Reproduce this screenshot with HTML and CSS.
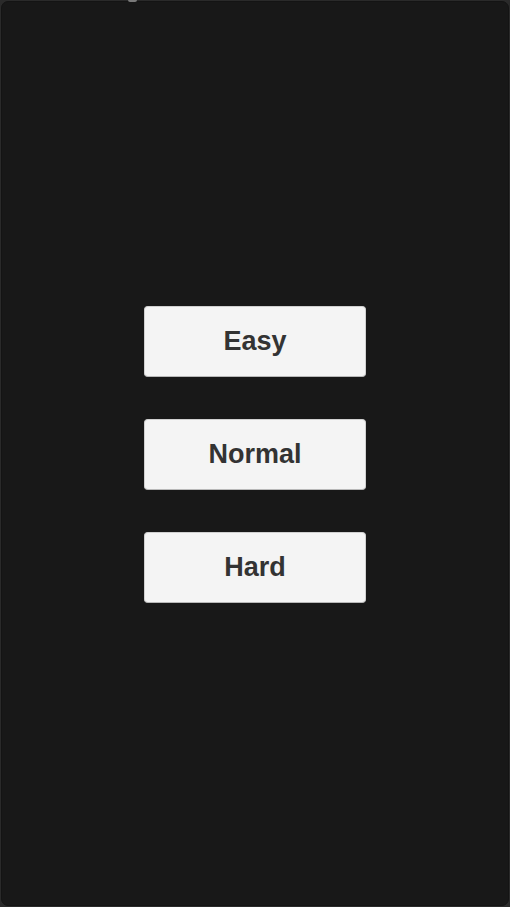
FILE: index.html
```html
<!DOCTYPE html>
<html>
<head>
<meta charset="utf-8">
<link rel="stylesheet" href="styles.css">
</head>
<body>
<div class="frame">
  <span class="notch"></span>
  <div class="panel">
    <div class="menu">
      <button class="btn">Easy</button>
      <button class="btn">Normal</button>
      <button class="btn">Hard</button>
    </div>
  </div>
</div>
</body>
</html>
```
FILE: styles.css
```css
html, body {
  margin: 0;
  padding: 0;
  height: 100%;
}
body {
  background: #2a2a2a;
}
.frame {
  position: relative;
  box-sizing: border-box;
  height: 907px;
  width: 510px;
  padding: 1px;
  display: flex;
}
.notch {
  position: absolute;
  left: 128px;
  top: 0;
  width: 9px;
  height: 2px;
  background: #7a7a7a;
  border-radius: 0 0 3px 3px;
}
.panel {
  flex: 1;
  background: #181818;
  border: 1px solid #141414;
  border-radius: 7px;
  display: flex;
  align-items: center;
  justify-content: center;
}
.menu {
  display: flex;
  flex-direction: column;
  gap: 42px;
  margin-top: 2px;
}
.btn {
  width: 222px;
  height: 71px;
  background: #f4f4f4;
  border: 1px solid #d0d0d0;
  border-bottom-color: #b8b8b8;
  border-radius: 4px;
  font-family: "Liberation Sans", Arial, sans-serif;
  font-weight: bold;
  font-size: 27px;
  color: #333333;
  padding: 0;
}
```
